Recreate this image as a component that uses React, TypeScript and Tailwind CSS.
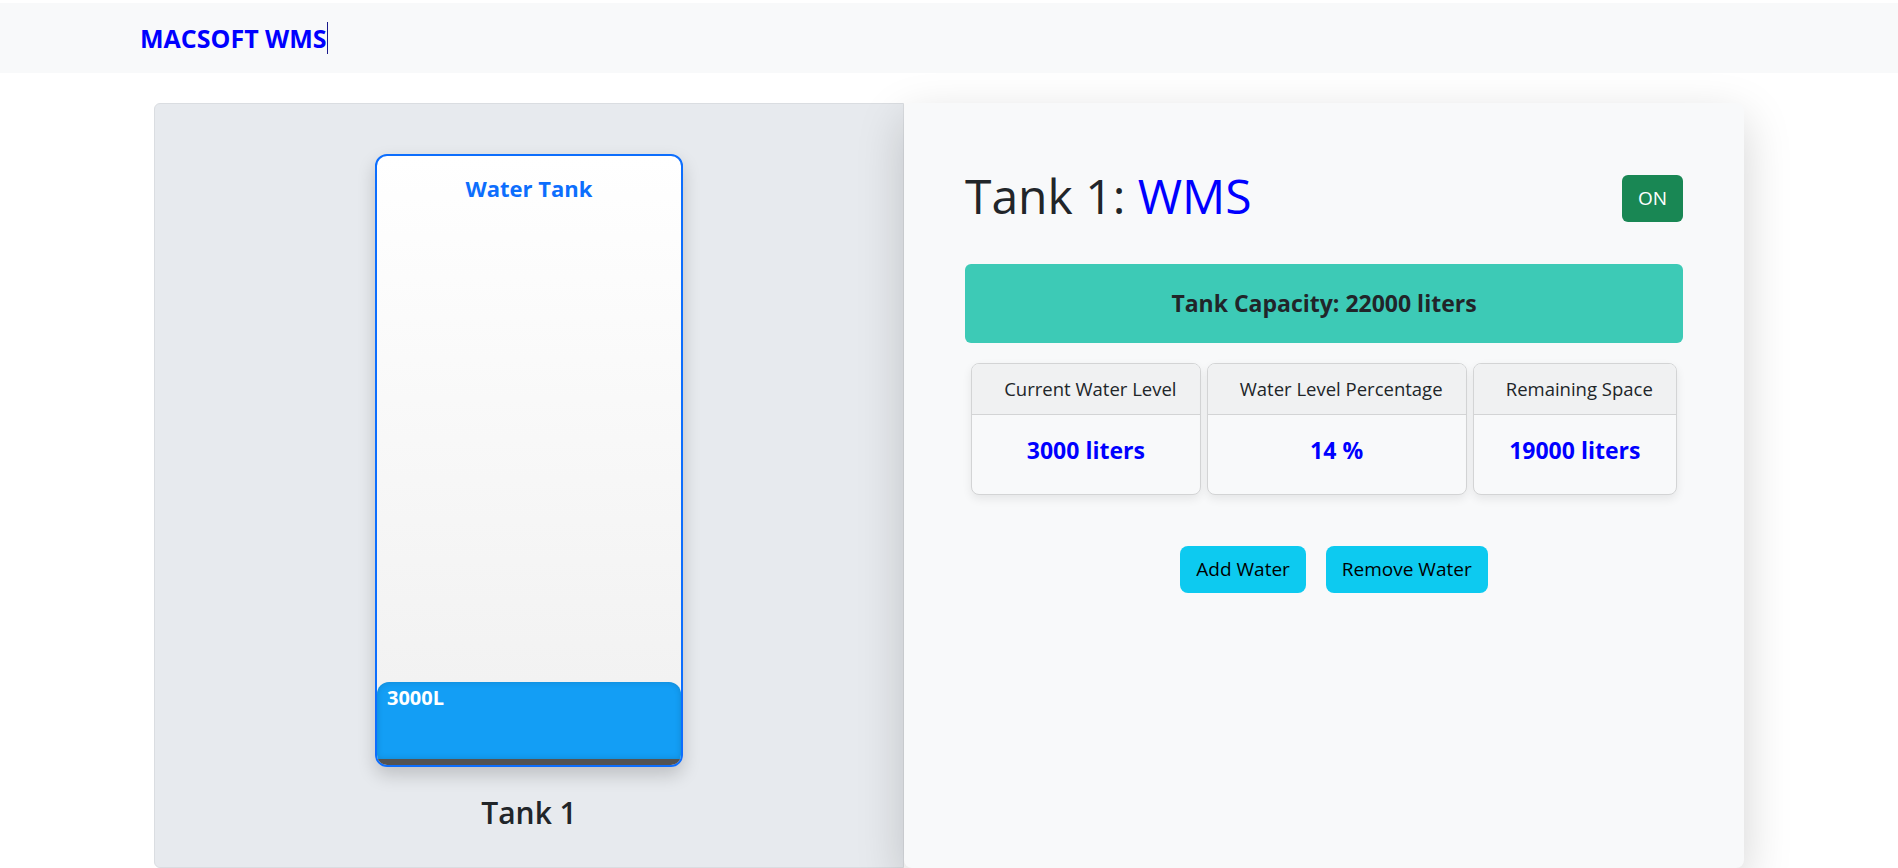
import React from 'react';

const stats = [
  { label: 'Current Water Level', value: '3000 liters' },
  { label: 'Water Level Percentage', value: '14 %' },
  { label: 'Remaining Space', value: '19000 liters' },
];

export default function App() {
  return (
    <div className="min-h-screen bg-white text-[#212529] font-['Open_Sans',sans-serif] overflow-hidden h-[868px]">
      {/* Navbar */}
      <div className="pt-[3px]">
        <nav className="h-[70px] bg-[#f8f9fa] flex items-center pl-[140px]">
          <span className="text-[25px] font-bold text-[#0000ff] leading-none">MACSOFT WMS</span>
          <span className="inline-block w-px h-[32px] bg-[#1a1a8c]"></span>
        </nav>
      </div>

      <div className="flex justify-center mt-[30px]">
        {/* Tank card */}
        <div className="w-[750px] h-[765px] bg-[#e7eaee] border border-[#dadde1] rounded-l-md flex flex-col items-center pt-[50px]">
          <div className="relative w-[308px] h-[613px] rounded-[12px] border-2 border-[#0d6efd] bg-gradient-to-b from-white to-[#f0f0f0] shadow-[0_8px_18px_rgba(0,0,0,0.18)] flex flex-col overflow-hidden">
            <div className="text-center text-[22px] font-bold text-[#0d6efd] pt-[16px]">Water Tank</div>
            <div className="flex-1"></div>
            <div className="h-[77px] bg-[#139ef5] rounded-t-[12px] shadow-[inset_0_0_6px_rgba(0,0,0,0.15)] px-[10px] pt-[1px]">
              <span className="text-[20px] font-bold text-white">3000L</span>
            </div>
            <div className="h-[6px] bg-[#535353]"></div>
          </div>
          <h2 className="mt-[28px] text-[30px] font-semibold leading-[1.2]">Tank 1</h2>
        </div>

        {/* Detail card */}
        <div className="w-[840px] h-[765px] bg-[#f8f9fa] rounded-lg shadow-[0_16px_48px_rgba(0,0,0,0.175)] pt-[64px] px-[61px]">
          <div className="flex items-start justify-between">
            <h1 className="text-[48px] leading-[1.2]">
              Tank 1: <span className="text-[#0000ff]">WMS</span>
            </h1>
            <button className="mt-[8px] h-[47px] px-4 rounded-md bg-[#198754] text-white text-[19px]">ON</button>
          </div>

          <div className="mt-[39px] h-[79px] rounded-md bg-[#3dcab6] flex items-center justify-center">
            <h4 className="text-[23px] font-bold">Tank Capacity: 22000 liters</h4>
          </div>

          <div className="mt-[20px] flex justify-evenly">
            {stats.map((s) => (
              <div key={s.label} className="h-[132px] rounded-lg border border-[#d3d4d5] bg-[#f8f9fa] shadow-[0_4px_10px_rgba(0,0,0,0.08)] overflow-hidden flex flex-col">
                <div className="h-[51px] bg-[#f0f1f2] border-b border-[#d3d4d5] flex items-center pl-[32px] pr-[23px] text-[18.5px]">
                  {s.label}
                </div>
                <div className="flex-1 flex items-center justify-center pb-[8px]">
                  <span className="text-[23px] font-bold text-[#0000ff]">{s.value}</span>
                </div>
              </div>
            ))}
          </div>

          <div className="mt-[51px] flex justify-center gap-5 pl-5">
            <button className="h-[47px] px-4 rounded-lg bg-[#0dcaf0] text-black text-[19px]">Add Water</button>
            <button className="h-[47px] px-4 rounded-lg bg-[#0dcaf0] text-black text-[19px]">Remove Water</button>
          </div>
        </div>
      </div>
    </div>
  );
}
